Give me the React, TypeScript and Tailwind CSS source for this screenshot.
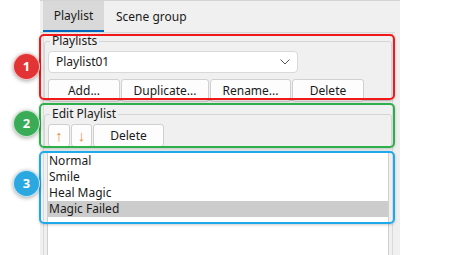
import React from "react";

const font = { fontFamily: '"Noto Sans", "Segoe UI", sans-serif' };

function Btn({ children, className = "" }: { children: React.ReactNode; className?: string }) {
  return (
    <div
      className={
        "shrink-0 flex items-center justify-center h-[23px] bg-[#fdfdfd] border border-[#d0d0d0] rounded-[3px] text-[12px] text-[#1a1a1a] " +
        className
      }
    >
      {children}
    </div>
  );
}

function Badge({ n, color, className }: { n: string; color: string; className: string }) {
  return (
    <div
      className={
        "absolute w-[27px] h-[27px] rounded-full flex items-center justify-center text-white text-[13px] font-bold border-[1.5px] border-white/70 shadow-[0_1px_4px_rgba(0,0,0,0.35)] " +
        color +
        " " +
        className
      }
    >
      {n}
    </div>
  );
}

export default function App() {
  return (
    <div className="relative w-[450px] h-[255px] bg-white overflow-hidden flex" style={font}>
      <div className="w-[40px] shrink-0" />
      <div className="w-[360px] h-full bg-[#f0f0f0] border-t border-[#d4d4d4] flex flex-col">
        {/* Tabs */}
        <div className="flex h-[32px] shrink-0 pl-[3px] border-b border-[#dadada] mr-[5px]">
          <div className="w-[61px] h-full bg-[#d9d9d9] border-b-2 border-[#0067c0] flex items-center justify-center text-[12px] text-[#1a1a1a]">
            Playlist
          </div>
          <div className="px-[12px] h-full flex items-center text-[12px] text-[#1a1a1a]">Scene group</div>
        </div>
        {/* Pane */}
        <div className="flex-1 ml-[3px] mr-[7px] border-l border-r border-[#dadada] flex flex-col">
          <fieldset className="shrink-0 border border-[#d5d5d5] rounded-[3px] mt-[1px] mx-0 px-[3px] pb-0 h-[67px]">
            <legend className="ml-[2px] px-[2px] text-[12px] leading-[14px] text-[#1a1a1a]">Playlists</legend>
            <div className="mt-[3px] w-[250px] h-[22px] bg-white border border-[#d9d9d9] rounded-[4px] flex items-center justify-between pl-[7px] pr-[6px] text-[12px] text-[#1a1a1a]">
              <span>Playlist01</span>
              <svg width="12" height="8" viewBox="0 0 12 8">
                <path d="M1.5 1.5 L6 6 L10.5 1.5" fill="none" stroke="#555" strokeWidth="1" />
              </svg>
            </div>
            <div className="flex gap-[1px] mt-[6px]">
              <Btn className="w-[72px]">Add...</Btn>
              <Btn className="w-[88px]">Duplicate...</Btn>
              <Btn className="w-[81px]">Rename...</Btn>
              <Btn className="w-[72px]">Delete</Btn>
            </div>
          </fieldset>
          <fieldset className="shrink-0 border border-[#d5d5d5] rounded-[3px] mt-[6px] mx-0 px-[3px] pb-0 h-[41px]">
            <legend className="ml-[2px] px-[2px] text-[12px] leading-[14px] text-[#1a1a1a]">Edit Playlist</legend>
            <div className="flex gap-[1px] mt-[3px]">
              <Btn className="w-[22px] text-[#e0944a] text-[15px] font-light">↑</Btn>
              <Btn className="w-[21px] text-[#e0944a] text-[15px] font-light">↓</Btn>
              <Btn className="w-[71px]">Delete</Btn>
            </div>
          </fieldset>
          <div className="mt-[4px] mx-[3px] flex-1 bg-white border border-[#cfcfcf] border-b-0 text-[12px] text-[#1a1a1a]">
            <div className="h-[16px] leading-[16px] pl-[1px]">Normal</div>
            <div className="h-[16px] leading-[16px] pl-[1px]">Smile</div>
            <div className="h-[16px] leading-[16px] pl-[1px]">Heal Magic</div>
            <div className="h-[16px] leading-[16px] pl-[1px] bg-[#cccccc]">Magic Failed</div>
          </div>
        </div>
      </div>

      {/* Annotations */}
      <div className="absolute left-[39px] top-[34px] w-[356px] h-[66px] border-2 border-[#f01818] rounded-[5px] shadow-[0_1px_3px_rgba(0,0,0,0.2)]" />
      <div className="absolute left-[39px] top-[103px] w-[356px] h-[45px] border-2 border-[#2db04b] rounded-[5px] shadow-[0_1px_3px_rgba(0,0,0,0.2)]" />
      <div className="absolute left-[39px] top-[151px] w-[356px] h-[73px] border-2 border-[#1eaaea] rounded-[5px] shadow-[0_1px_3px_rgba(0,0,0,0.2)]" />
      <Badge n="1" color="bg-[#e23434]" className="left-[13px] top-[53px]" />
      <Badge n="2" color="bg-[#3aab57]" className="left-[13px] top-[110px]" />
      <Badge n="3" color="bg-[#2aa8df]" className="left-[13px] top-[170px]" />
    </div>
  );
}
